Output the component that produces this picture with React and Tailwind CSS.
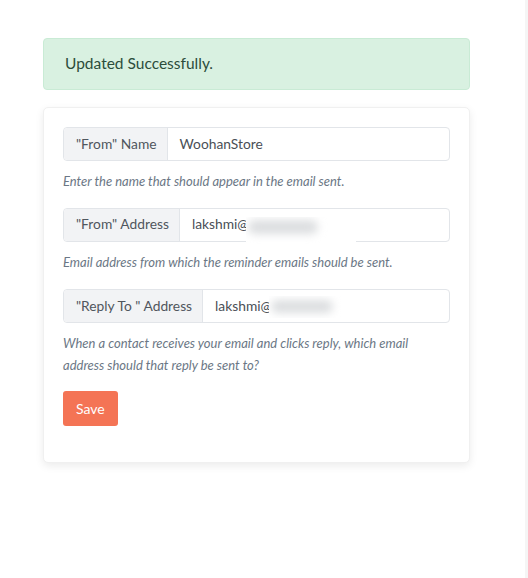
export default function App() {
  const font = { fontFamily: "Lato, 'Open Sans', sans-serif" };
  const groups = [
    {
      label: '"From" Name',
      value: "WoohanStore",
      help: "Enter the name that should appear in the email sent.",
    },
    {
      label: '"From" Address',
      value: "lakshmi@",
      blur: "wide",
      help: "Email address from which the reminder emails should be sent.",
    },
    {
      label: '"Reply To " Address',
      value: "lakshmi@",
      blur: "narrow",
      help: "When a contact receives your email and clicks reply, which email address should that reply be sent to?",
    },
  ];
  return (
    <div className="flex min-h-[578px] w-[528px] bg-white" style={font}>
      <div className="flex-1 pl-[43px] pr-[55px] pt-[38px]">
        <div className="flex h-[52px] items-center rounded-[4px] border border-[#c9ebd5] bg-[#d9f1e1] pl-[21px] text-[15.5px] text-[#2c4d3b]">
          Updated Successfully.
        </div>
        <div className="mt-[17px] rounded-[5px] border border-[#f0f0f0] bg-white px-[19px] pb-[36px] pt-[19px] shadow-[0_3px_8px_rgba(0,0,0,0.08)]">
          {groups.map((g, i) => (
            <div key={i} className={i === 1 ? "mb-[16px]" : "mb-[15px]"}>
              <div className="flex h-[34px] rounded-[4px] border border-[#e2e5e9] text-[13.8px]">
                <div className="flex items-center rounded-l-[4px] border-r border-[#e2e5e9] bg-[#f2f3f5] pl-[12px] pr-[10px] text-[#50565d]">
                  {g.label}
                </div>
                <div className="relative flex flex-1 items-center pl-[12px] text-[#4a4f56]">
                  <span>{g.value}</span>
                  {g.blur === "wide" && (
                    <div className="absolute left-[66px] top-[8px] h-[30px] w-[110px] overflow-hidden bg-white">
                      <div className="absolute left-[2px] top-[3px] h-[14px] w-[70px] rounded-full bg-[#dcdee0] blur-[4px]"></div>
                    </div>
                  )}
                  {g.blur === "narrow" && (
                    <div className="absolute left-[66px] top-[6px] h-[22px] w-[72px] overflow-hidden bg-white">
                      <div className="absolute left-[2px] top-[4px] h-[13px] w-[62px] rounded-full bg-[#dcdee0] blur-[4px]"></div>
                    </div>
                  )}
                </div>
              </div>
              <p className="mt-[10px] text-[13px] italic leading-[21.5px] text-[#6b7785]">{g.help}</p>
            </div>
          ))}
          <button className="h-[35px] rounded-[3px] bg-[#f47455] px-[13px] text-[14px] text-white">Save</button>
        </div>
      </div>
      <div className="w-[3px] bg-[#f5f5f5]"></div>
    </div>
  );
}
